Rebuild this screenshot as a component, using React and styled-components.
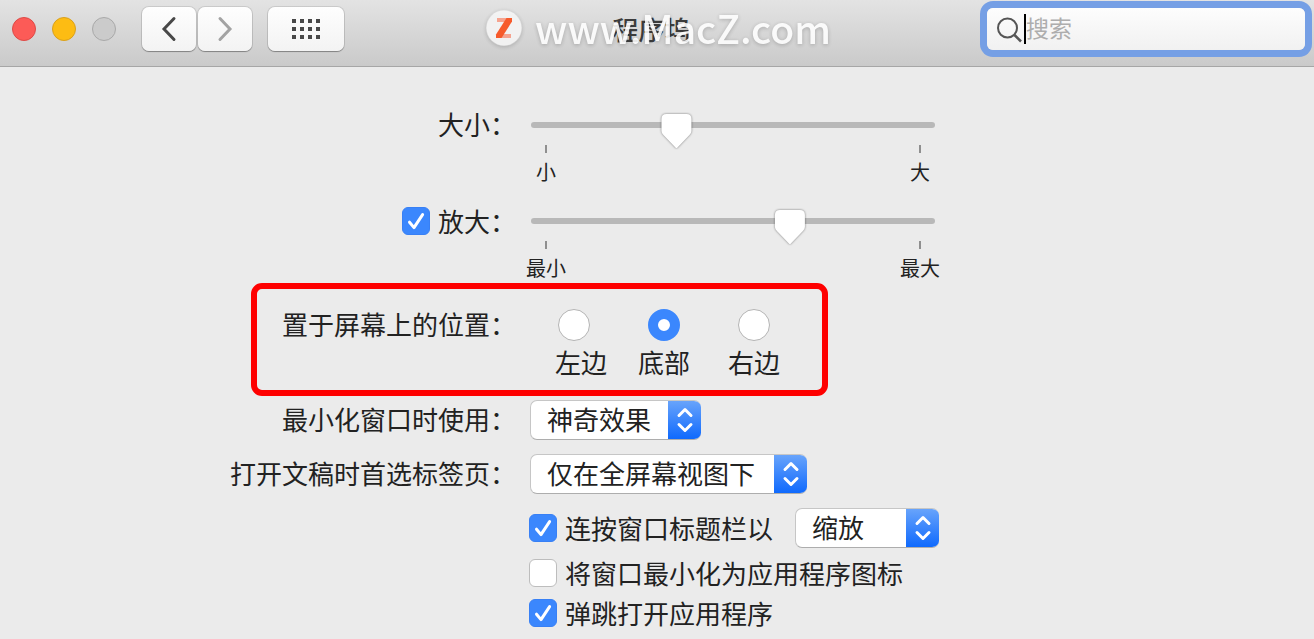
/* eslint-disable react/prop-types */
import { useId, useState } from 'react';
import styled, { createGlobalStyle } from 'styled-components';

const GlobalStyle = createGlobalStyle`
  * {
    box-sizing: border-box;
  }
  body {
    margin: 0;
    background-color: #ebebeb;
    color: #222;
    font-family: 'Noto Sans CJK SC', sans-serif;
    font-size: 26px;
    line-height: 40px;
  }
  input,
  select,
  button {
    margin: 0;
    font: inherit;
    color: inherit;
  }
`;

const Check = ({ label, hiddenLabel, defaultChecked }) => {
  const id = useId();
  const [checked, setChecked] = useState(Boolean(defaultChecked));
  return (
    <CheckLine>
      <CheckMark>
        <CheckInput
          id={id}
          type="checkbox"
          aria-label={hiddenLabel}
          checked={checked}
          onChange={(e) => setChecked(e.target.checked)}
        />
        {checked && (
          <svg width="28" height="28" viewBox="0 0 28 28" fill="none">
            <path
              d="M7.5 15.2L12 20.6L20.6 7.6"
              stroke="#fff"
              strokeWidth="3"
              strokeLinecap="round"
              strokeLinejoin="round"
            />
          </svg>
        )}
      </CheckMark>
      <label htmlFor={id}>{label}</label>
    </CheckLine>
  );
};

const Slider = ({ name, value, min, max }) => (
  <SliderBox>
    <Track>
      <Range type="range" aria-label={name} min="0" max="1000" defaultValue={value} />
    </Track>
    <Ticks>
      <Tick>{min}</Tick>
      <Tick>{max}</Tick>
    </Ticks>
  </SliderBox>
);

const PopUp = ({ id, label, value, width }) => (
  <PopUpBox $width={width}>
    <Select id={id} aria-label={label} defaultValue={value}>
      <option value={value}>{value}</option>
    </Select>
    <Cap>
      <svg width="18" height="26" viewBox="0 0 18 26" fill="none">
        <path
          d="M3 8.5L9 2.5L15 8.5M3 17.5L9 23.5L15 17.5"
          stroke="#fff"
          strokeWidth="3"
          strokeLinecap="round"
          strokeLinejoin="round"
        />
      </svg>
    </Cap>
  </PopUpBox>
);

const positions = ['左边', '底部', '右边'];

const App = () => {
  const [position, setPosition] = useState('底部');

  return (
    <>
      <GlobalStyle />
      <Toolbar>
        <Controls>
          <Lights>
            <Light $color="#fc5b57" $border="#dd4a46" />
            <Light $color="#fdbc13" $border="#d9a01c" />
            <Light $color="#cbcbcb" $border="#a9a9a9" />
          </Lights>
          <NavButtons>
            <ToolButton $width="54px" aria-label="返回">
              <svg width="18" height="26" viewBox="0 0 18 26" fill="none">
                <path d="M14 2.5L4 13L14 23.5" stroke="#484848" strokeWidth="3" strokeLinecap="round" />
              </svg>
            </ToolButton>
            <ToolButton $width="54px" aria-label="前进">
              <svg width="18" height="26" viewBox="0 0 18 26" fill="none">
                <path d="M4 2.5L14 13L4 23.5" stroke="#a3a3a3" strokeWidth="3" strokeLinecap="round" />
              </svg>
            </ToolButton>
          </NavButtons>
          <ToolButton $width="76px" aria-label="显示全部">
            <svg width="28" height="20" viewBox="0 0 28 20" fill="#484848">
              {[0, 8, 16].map((y) =>
                [0, 8, 16, 24].map((x) => <rect key={`${x}-${y}`} x={x} y={y} width="4" height="4" />)
              )}
            </svg>
          </ToolButton>
        </Controls>
        <TitleArea>
          <Title>程序坞</Title>
          <Watermark>
            <svg width="36" height="36" viewBox="0 0 36 36">
              <circle cx="18" cy="18" r="17.5" fill="#f6f6f6" />
              <path d="M11 8H25L23 12H11ZM13 24H25V28H11Z" fill="#fa9d86" />
              <path d="M20.5 8H26V11.5L15.5 28H10V24.5Z" fill="#fb4a14" />
            </svg>
            <span>www.MacZ.com</span>
          </Watermark>
        </TitleArea>
        <SearchField>
          <svg width="28" height="28" viewBox="0 0 28 28" fill="none" stroke="#555" strokeWidth="2">
            <circle cx="11.5" cy="13" r="9.5" />
            <path d="M18.5 20L25 26.5" strokeWidth="2.6" />
          </svg>
          <Caret />
          <SearchInput type="text" placeholder="搜索" aria-label="搜索" />
        </SearchField>
      </Toolbar>

      <Form>
        <SliderRow>
          <Label>大小：</Label>
          <Slider name="大小" value={348} min="小" max="大" />
        </SliderRow>
        <SliderRow>
          <Label as="div">
            <Check label="放大：" defaultChecked />
          </Label>
          <Slider name="放大" value={653} min="最小" max="最大" />
        </SliderRow>

        <PositionRow>
          <Label>置于屏幕上的位置：</Label>
          <RadioGroup role="radiogroup" aria-label="置于屏幕上的位置">
            {positions.map((item, index) => (
              <RadioItem key={item} $align={index === 0 ? 'flex-start' : 'center'}>
                <Radio
                  type="radio"
                  name="position"
                  checked={position === item}
                  onChange={() => setPosition(item)}
                />
                {item}
              </RadioItem>
            ))}
          </RadioGroup>
          <Highlight />
        </PositionRow>

        <Rows>
          <Row>
            <Label as="label" htmlFor="effect">
              最小化窗口时使用：
            </Label>
            <PopUp id="effect" value="神奇效果" width="171px" />
          </Row>
          <Row>
            <Label as="label" htmlFor="tabs">
              打开文稿时首选标签页：
            </Label>
            <PopUp id="tabs" value="仅在全屏幕视图下" width="277px" />
          </Row>
          <Row>
            <Options>
              <TitleBarOption>
                <Check label="连按窗口标题栏以" defaultChecked />
                <PopUp label="连按窗口标题栏以" value="缩放" width="144px" />
              </TitleBarOption>
              <Check label="将窗口最小化为应用程序图标" />
              <Check label="弹跳打开应用程序" defaultChecked />
            </Options>
          </Row>
        </Rows>
      </Form>
    </>
  );
};

const Toolbar = styled.header`
  display: grid;
  grid-template-columns: 1fr auto 1fr;
  align-items: center;
  padding: 7px 9px 15px 12px;
  background: linear-gradient(#e3e3e3, #cacaca);
  border-bottom: 1px solid #a6a6a6;
`;
const Controls = styled.div`
  display: flex;
  align-items: center;
`;
const Lights = styled.div`
  display: flex;
  gap: 16px;
  margin-right: 26px;
`;
const Light = styled.span`
  width: 24px;
  height: 24px;
  border-radius: 50%;
  background-color: ${({ $color }) => $color};
  border: 1px solid ${({ $border }) => $border};
`;
const NavButtons = styled.div`
  display: flex;
  gap: 2px;
  margin-right: 16px;
`;
const ToolButton = styled.button`
  display: flex;
  align-items: center;
  justify-content: center;
  width: ${({ $width }) => $width};
  height: 44px;
  padding: 0;
  border: 0;
  border-radius: 7px;
  background: linear-gradient(#fefefe, #f3f3f3);
  box-shadow: 0 0 0 1px rgba(0, 0, 0, 0.1), 0 1px 1px rgba(0, 0, 0, 0.3);
`;
const TitleArea = styled.div`
  display: grid;
  align-items: center;
  > * {
    grid-area: 1 / 1;
  }
`;
const Title = styled.h1`
  margin: 0;
  padding-right: 14px;
  font-size: 26px;
  font-weight: 500;
  text-align: center;
  color: #3c3c3c;
`;
const Watermark = styled.div`
  display: flex;
  align-items: flex-start;
  gap: 13px;
  padding-bottom: 2px;
  font-size: 39px;
  font-weight: 500;
  line-height: 34px;
  color: #fff;
  opacity: 0.88;
  text-shadow: 0 1px 4px rgba(0, 0, 0, 0.25);
  svg {
    border-radius: 50%;
    box-shadow: 0 1px 4px rgba(0, 0, 0, 0.2);
  }
`;
const SearchField = styled.div`
  display: flex;
  align-items: center;
  justify-self: end;
  width: 318px;
  height: 42px;
  padding-left: 9px;
  border-radius: 6px;
  background: linear-gradient(#fdfdfd, #f1f1f1);
  box-shadow: 0 0 0 7px #759fe5;
`;
const Caret = styled.span`
  width: 2px;
  height: 30px;
  background-color: #000;
`;
const SearchInput = styled.input`
  flex: 1;
  min-width: 0;
  padding: 0 0 4px;
  border: 0;
  outline: 0;
  background: none;
  font-size: 23px;
  line-height: 32px;
  &::placeholder {
    color: #adadad;
  }
`;

const Form = styled.form`
  display: flex;
  flex-direction: column;
  padding-top: 38px;
`;
const Row = styled.div`
  display: grid;
  grid-template-columns: minmax(0, 516px) 1fr;
  column-gap: 14px;
  align-items: start;
  white-space: nowrap;
`;
const SliderRow = styled(Row)`
  min-height: 96px;
`;
const Rows = styled.div`
  display: flex;
  flex-direction: column;
  gap: 14px;
`;
const Label = styled.span`
  justify-self: end;
  line-height: 37px;
`;

const SliderBox = styled.div`
  width: 404px;
  max-width: 100%;
  margin-left: 1px;
  padding-top: 8px;
`;
const Track = styled.div`
  display: grid;
  > *,
  &::before {
    grid-area: 1 / 1;
  }
  &::before {
    content: '';
    height: 6px;
    margin-top: 9px;
    border-radius: 3px;
    background-color: #b8b8b8;
  }
`;
const Range = styled.input`
  appearance: none;
  width: 100%;
  height: 36px;
  background: none;
  outline: 0;
  filter: drop-shadow(0 0 1px rgba(0, 0, 0, 0.5));
  &::-webkit-slider-thumb {
    appearance: none;
    width: 32px;
    height: 36px;
    background-color: #fff;
    clip-path: path('M6 1H26Q31 1 31 6V18Q31 20 29 22L17 34.5Q16 35.5 15 34.5L3 22Q1 20 1 18V6Q1 1 6 1Z');
  }
`;
const Ticks = styled.div`
  display: flex;
  justify-content: space-between;
  margin: -4px -5px 0;
`;
const Tick = styled.span`
  display: flex;
  flex-direction: column;
  align-items: center;
  gap: 7px;
  width: 40px;
  font-size: 20px;
  line-height: 24px;
  &::before {
    content: '';
    width: 2px;
    height: 8px;
    background-color: #8f8f8f;
  }
`;

const CheckLine = styled.div`
  display: flex;
  align-items: center;
  gap: 8px;
  line-height: 40px;
`;
const CheckMark = styled.span`
  display: grid;
  > * {
    grid-area: 1 / 1;
  }
  svg {
    pointer-events: none;
  }
`;
const CheckInput = styled.input`
  appearance: none;
  width: 28px;
  height: 28px;
  border: 1px solid #bdbdbd;
  border-radius: 6px;
  background-color: #fff;
  &:checked {
    border-color: #3880f5;
    background-color: #3b87fd;
  }
`;

const PositionRow = styled(Row)`
  position: relative;
  margin: 8px 0 20px;
`;
const RadioGroup = styled.div`
  display: grid;
  grid-template-columns: 64px 90px 90px;
  padding: 4px 0 2px 25px;
`;
const RadioItem = styled.label`
  display: flex;
  flex-direction: column;
  align-items: ${({ $align }) => $align};
  gap: 5px;
  line-height: 32px;
`;
const Radio = styled.input`
  appearance: none;
  width: 32px;
  height: 32px;
  border: 1px solid #b4b4b4;
  border-radius: 50%;
  background-color: #fff;
  && {
    margin: 0 3px;
  }
  &:checked {
    border: 10px solid #3b87fd;
  }
`;
/* red annotation frame drawn over the position row */
const Highlight = styled.div`
  position: absolute;
  top: -22px;
  left: 251px;
  width: 577px;
  height: 113px;
  border: 6px solid #fe0000;
  border-radius: 11px;
  pointer-events: none;
`;

const PopUpBox = styled.div`
  display: flex;
  width: ${({ $width }) => $width};
  height: 40px;
  border-radius: 7px;
  overflow: hidden;
  background-color: #fff;
  border: 1px solid #c6c6c6;
  border-bottom-color: #adadad;
  border-right: 0;
  position: relative;
`;
const Select = styled.select`
  appearance: none;
  width: 100%;
  padding: 0 33px 2px 16px;
  border: 0;
  outline: 0;
  background: none;
  line-height: 36px;
`;
const Cap = styled.span`
  position: absolute;
  top: -1px;
  right: 0;
  bottom: -1px;
  display: flex;
  align-items: center;
  justify-content: center;
  width: 33px;
  background: linear-gradient(#6aa5fb, #0d68fd);
  pointer-events: none;
`;

const Options = styled.div`
  grid-column: 2;
  margin-left: -1px;
`;
const TitleBarOption = styled.div`
  display: flex;
  gap: 22px;
  margin-bottom: 5px;
`;

export default App;
